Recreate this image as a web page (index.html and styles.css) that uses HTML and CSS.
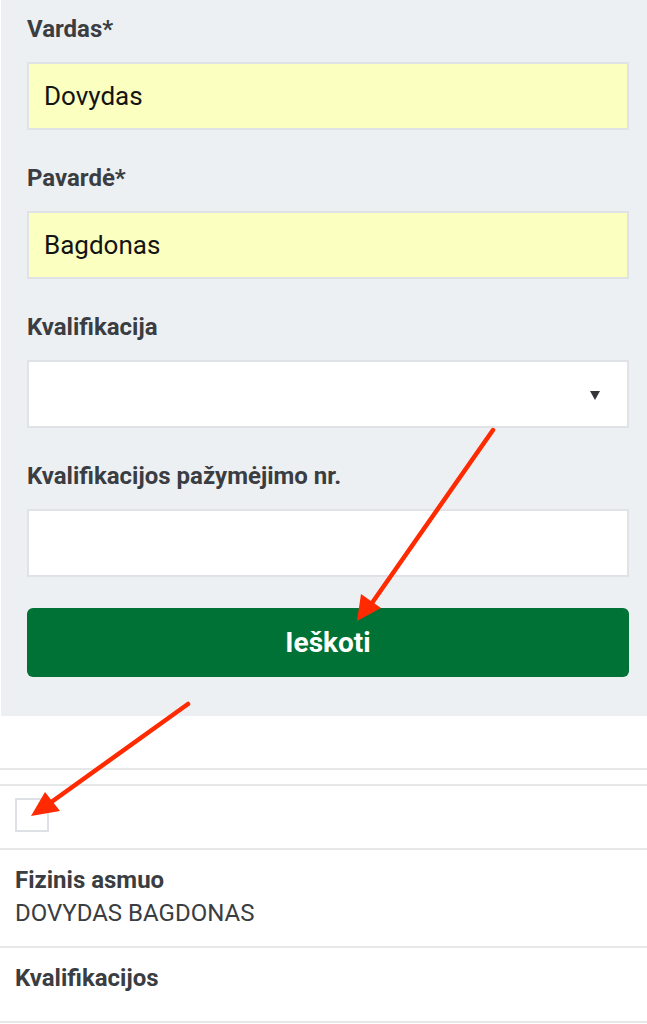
FILE: index.html
```html
<!DOCTYPE html>
<html lang="lt">
<head>
<meta charset="utf-8">
<title>Paieška</title>
<link rel="stylesheet" href="styles.css">
</head>
<body>
<div class="page">
  <form class="panel">
    <div class="field">
      <label class="label">Vardas*</label>
      <div class="input filled">Dovydas</div>
    </div>
    <div class="field">
      <label class="label">Pavardė*</label>
      <div class="input filled">Bagdonas</div>
    </div>
    <div class="field">
      <label class="label">Kvalifikacija</label>
      <div class="input select"><span class="caret"></span></div>
    </div>
    <div class="field">
      <label class="label">Kvalifikacijos pažymėjimo nr.</label>
      <div class="input"></div>
    </div>
    <button type="button" class="btn">Ieškoti</button>
  </form>

  <div class="results">
    <div class="spacer"></div>
    <div class="rule"></div>
    <div class="gap"></div>
    <div class="rule"></div>
    <div class="check-row"><span class="checkbox"></span></div>
    <div class="rule"></div>
    <div class="item">
      <div class="item-title">Fizinis asmuo</div>
      <div class="item-value">DOVYDAS BAGDONAS</div>
    </div>
    <div class="rule"></div>
    <div class="item item-last">
      <div class="item-title">Kvalifikacijos</div>
    </div>
    <div class="rule"></div>
  </div>

  <svg class="arrows" width="647" height="1024" viewBox="0 0 647 1024">
    <line x1="493" y1="430" x2="372" y2="603" stroke="#ff2a00" stroke-width="4.5" stroke-linecap="round"/>
    <polygon points="357,621 361,594 381,608" fill="#ff2a00"/>
    <line x1="188" y1="704" x2="50" y2="803" stroke="#ff2a00" stroke-width="4.5" stroke-linecap="round"/>
    <polygon points="31,816 45,792 60,811" fill="#ff2a00"/>
  </svg>
</div>
</body>
</html>
```

FILE: styles.css
```css
* { box-sizing: border-box; }

html, body {
  margin: 0;
  padding: 0;
  background: #ffffff;
}

body {
  font-family: Roboto, "Liberation Sans", Arial, sans-serif;
  color: #3a3d41;
}

.page {
  position: relative;
  width: 647px;
  height: 1024px;
  overflow: hidden;
}

.panel {
  margin: 0 0 0 1px;
  background: #edf0f3;
  padding: 15px 18px 39px 26px;
  display: flex;
  flex-direction: column;
  gap: 34px;
}

.field {
  display: flex;
  flex-direction: column;
  gap: 19px;
}

.label {
  font-size: 24px;
  line-height: 28px;
  font-weight: 700;
  color: #3a3d41;
}

.input {
  height: 68px;
  background: #ffffff;
  border: 2px solid #dfe3e7;
  display: flex;
  align-items: center;
  padding: 0 15px;
  font-size: 26px;
  color: #141414;
}

.input.filled {
  background: #fbffbf;
}

.input.select {
  justify-content: flex-end;
  padding-right: 27px;
}

.caret {
  width: 0;
  height: 0;
  border-left: 5px solid transparent;
  border-right: 5px solid transparent;
  border-top: 9px solid #333538;
  margin-top: 2px;
}

.btn {
  margin-top: -3px;
  height: 69px;
  border: none;
  border-radius: 6px;
  background: #007236;
  color: #ffffff;
  font-family: Roboto, "Liberation Sans", Arial, sans-serif;
  font-size: 28px;
  font-weight: 700;
  padding: 0;
}

.results {
  display: flex;
  flex-direction: column;
}

.spacer { height: 52px; }
.gap { height: 14px; }

.rule {
  height: 2px;
  background: #e6e7e8;
}

.check-row {
  padding: 12px 15px 16px;
  display: flex;
}

.checkbox {
  width: 34px;
  height: 34px;
  border: 2px solid #dde1e5;
  background: #fff;
}

.item {
  padding: 14px 15px 16px;
  font-size: 24px;
  line-height: 33px;
}

.item-last {
  padding-bottom: 26px;
}

.item-title {
  font-weight: 700;
  color: #3a3d41;
}

.item-value {
  color: #3a3d41;
}

.arrows {
  position: absolute;
  left: 0;
  top: 0;
  pointer-events: none;
}
```
